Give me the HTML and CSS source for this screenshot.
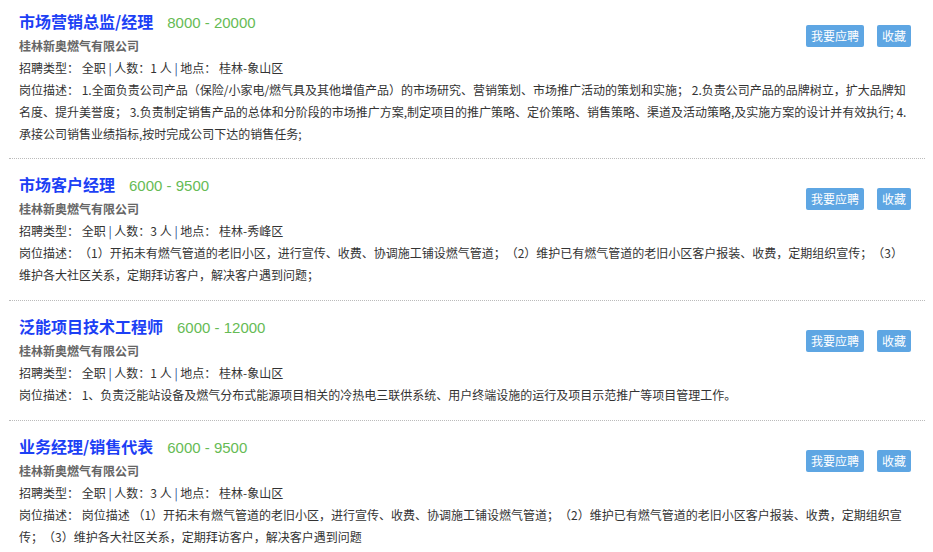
FILE: index.html
```html
<!doctype html>
<html lang="zh-CN">
<head>
	<meta charset="UTF-8">
	<title>招聘职位</title>
	<link rel="stylesheet" href="styles.css">
</head>
<body>
	<div class="job_list">
		<div class="job">
			<div class="btns">
				<a class="btn">我要应聘</a>
				<a class="btn">收藏</a>
			</div>
			<h3 class="job_title">市场营销总监/经理<span class="salary">8000 - 20000</span></h3>
			<p class="company">桂林新奥燃气有限公司</p>
			<p class="info">招聘类型： 全职 <i>|</i> 人数：1 人 <i>|</i> 地点： 桂林-象山区</p>
			<p class="desc">岗位描述： 1.全面负责公司产品（保险/小家电/燃气具及其他增值产品）的市场研究、营销策划、市场推广活动的策划和实施； 2.负责公司产品的品牌树立，扩大品牌知名度、提升美誉度； 3.负责制定销售产品的总体和分阶段的市场推广方案,制定项目的推广策略、定价策略、销售策略、渠道及活动策略,及实施方案的设计并有效执行; 4.承接公司销售业绩指标,按时完成公司下达的销售任务;</p>
		</div>
		<div class="job">
			<div class="btns">
				<a class="btn">我要应聘</a>
				<a class="btn">收藏</a>
			</div>
			<h3 class="job_title">市场客户经理<span class="salary">6000 - 9500</span></h3>
			<p class="company">桂林新奥燃气有限公司</p>
			<p class="info">招聘类型： 全职 <i>|</i> 人数：3 人 <i>|</i> 地点： 桂林-秀峰区</p>
			<p class="desc">岗位描述：　（1）开拓未有燃气管道的老旧小区，进行宣传、收费、协调施工铺设燃气管道；　（2）维护已有燃气管道的老旧小区客户报装、收费，定期组织宣传；　（3）维护各大社区关系，定期拜访客户，解决客户遇到问题；</p>
		</div>
		<div class="job">
			<div class="btns">
				<a class="btn">我要应聘</a>
				<a class="btn">收藏</a>
			</div>
			<h3 class="job_title">泛能项目技术工程师<span class="salary">6000 - 12000</span></h3>
			<p class="company">桂林新奥燃气有限公司</p>
			<p class="info">招聘类型： 全职 <i>|</i> 人数：1 人 <i>|</i> 地点： 桂林-象山区</p>
			<p class="desc">岗位描述： 1、负责泛能站设备及燃气分布式能源项目相关的冷热电三联供系统、用户终端设施的运行及项目示范推广等项目管理工作。</p>
		</div>
		<div class="job">
			<div class="btns">
				<a class="btn">我要应聘</a>
				<a class="btn">收藏</a>
			</div>
			<h3 class="job_title">业务经理/销售代表<span class="salary">6000 - 9500</span></h3>
			<p class="company">桂林新奥燃气有限公司</p>
			<p class="info">招聘类型： 全职 <i>|</i> 人数：3 人 <i>|</i> 地点： 桂林-象山区</p>
			<p class="desc">岗位描述： 岗位描述 （1）开拓未有燃气管道的老旧小区，进行宣传、收费、协调施工铺设燃气管道；　（2）维护已有燃气管道的老旧小区客户报装、收费，定期组织宣传；　（3）维护各大社区关系，定期拜访客户，解决客户遇到问题</p>
		</div>
	</div>
</body>
</html>
```

FILE: styles.css
```css
*{
	margin: 0;
	padding: 0;
}
body{
	background: #fff;
	font-family: "Microsoft YaHei", "Noto Sans CJK SC", sans-serif;
	font-size: 12px;
	color: #333;
}
.job_list{
	width: 916px;
	margin-left: 9px;
}
.job{
	padding: 13px 14px 14px 10px;
	border-bottom: 1px dotted #bbb;
}
.job:first-child{
	padding-top: 9px;
	padding-bottom: 13px;
}
.btns{
	float: right;
	margin-top: 16px;
	display: flex;
	gap: 13px;
}
.btn{
	display: block;
	height: 22px;
	line-height: 22px;
	padding: 0 5px;
	background: #5ea6e3;
	color: #fff;
	border-radius: 2px;
	font-size: 12px;
}
.job_title{
	font-size: 16px;
	font-weight: bold;
	line-height: 24px;
	color: #1c40f5;
}
.salary{
	font-family: "Liberation Sans", "Noto Sans CJK SC", sans-serif;
	font-size: 15px;
	font-weight: normal;
	color: #66bb55;
	margin-left: 14px;
}
.company{
	line-height: 22px;
	color: #666;
	font-weight: bold;
}
.info,.desc{
	line-height: 22px;
}
.info i{
	font-style: normal;
	color: #1d3a8a;
}
```
